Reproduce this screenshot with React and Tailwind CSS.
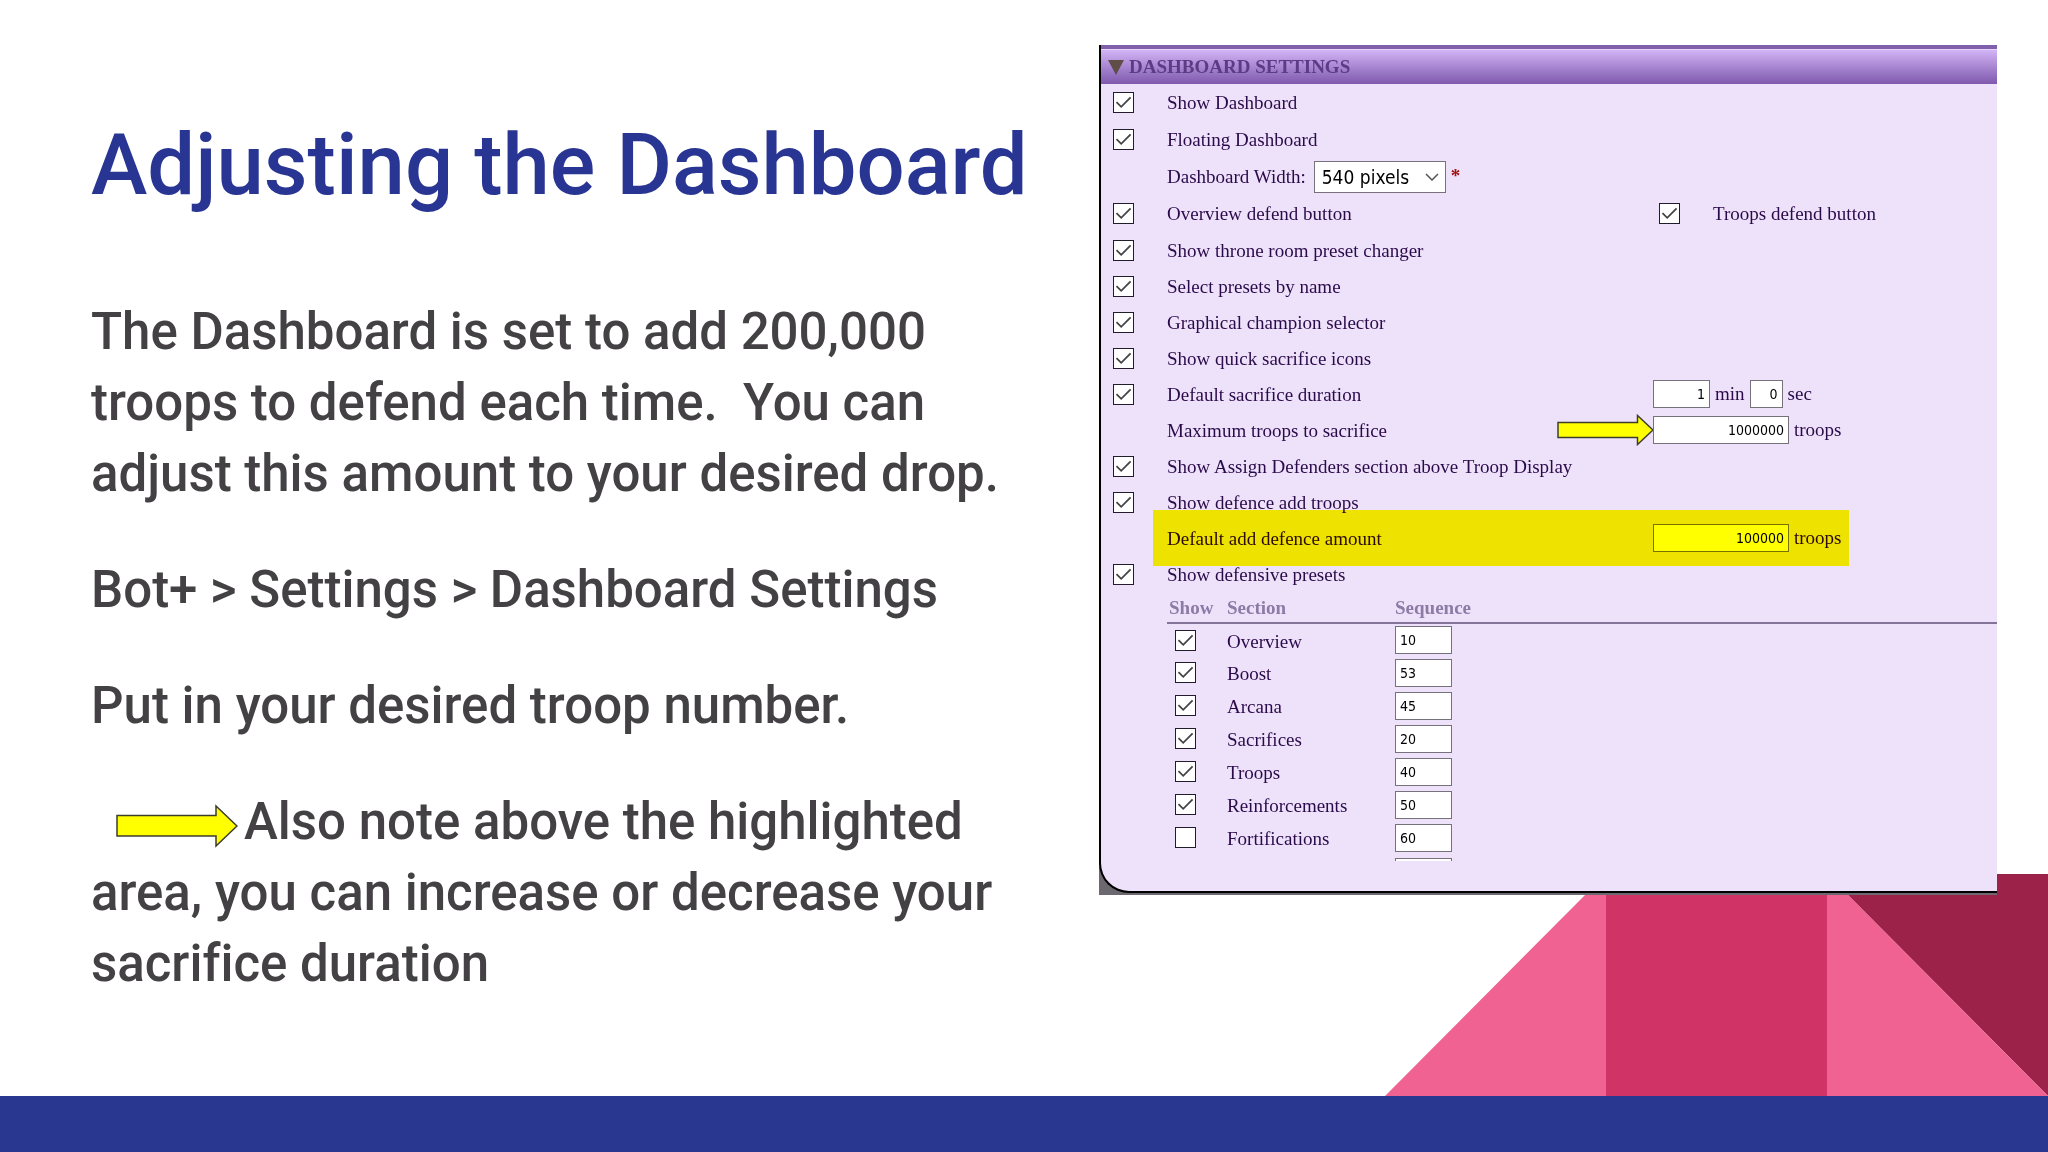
const topRows = [
  { id: "show-dashboard", label: "Show Dashboard" },
  { id: "floating-dashboard", label: "Floating Dashboard" },
];

const middleRows = [
  { id: "throne-preset", label: "Show throne room preset changer" },
  { id: "presets-by-name", label: "Select presets by name" },
  { id: "champion-selector", label: "Graphical champion selector" },
  { id: "quick-sacrifice", label: "Show quick sacrifice icons" },
];

const sections = [
  { name: "Overview", sequence: 10, show: true },
  { name: "Boost", sequence: 53, show: true },
  { name: "Arcana", sequence: 45, show: true },
  { name: "Sacrifices", sequence: 20, show: true },
  { name: "Troops", sequence: 40, show: true },
  { name: "Reinforcements", sequence: 50, show: true },
  { name: "Fortifications", sequence: 60, show: false },
];

function Checkbox({ id, checked = true, label }) {
  return (
    <span className="inline-grid size-[21px] shrink-0">
      <input
        id={id}
        type="checkbox"
        defaultChecked={checked}
        aria-label={label}
        className="peer col-start-1 row-start-1 size-[21px] appearance-none border border-[#221c2c] bg-white"
      />
      <svg
        viewBox="0 0 21 21"
        className="pointer-events-none invisible col-start-1 row-start-1 size-[21px] peer-checked:visible"
        fill="none"
        stroke="#444"
        strokeWidth="1.8"
      >
        <path d="M3.5 10.2 8.2 14.8 17.6 5.4" />
      </svg>
    </span>
  );
}

function NumberBox({ id, value, label, className }) {
  return (
    <input
      id={id}
      type="text"
      defaultValue={value}
      aria-label={label}
      className={`h-7 border border-[#77717c] px-1 font-['DejaVu_Sans_Condensed','DejaVu_Sans',sans-serif] text-sm text-black ${className}`}
    />
  );
}

function Row({ id, label, tall, hasCheckbox = true, children }) {
  return (
    <div className={`relative flex items-center ${tall ? "h-[37px]" : "h-9"}`}>
      <div className="flex w-[66px] shrink-0 pl-3">
        {hasCheckbox && <Checkbox id={id} />}
      </div>
      <label htmlFor={id} className="pt-[2px] whitespace-nowrap">
        {label}
      </label>
      {children}
    </div>
  );
}

// Controls that sit in the right half of a settings row
function Controls({ children }) {
  return (
    <div className="absolute inset-y-0 left-[552px] flex items-center gap-[5px]">
      {children}
    </div>
  );
}

function DashboardSettings() {
  return (
    <div className="relative bg-[#6d6870] pb-[2px]">
      <div className="rounded-bl-[30px] border-b-2 border-l-2 border-black bg-[#eee2fb] pb-[30px] font-['Liberation_Serif',serif] text-[19px] text-[#2b0a4a]">
        <h2 className="border-t-4 border-[#8060ab]">
          <button
            type="button"
            className="flex h-[35px] w-full items-center gap-[5px] border-t border-[#e6d3fb] bg-linear-to-b from-[#d3b4f6] to-[#7f59ad] pl-[7px] font-bold text-[#5c3c84]"
          >
            <svg viewBox="0 0 16 15" className="h-[15px] w-4" fill="#5f4d48">
              <path d="M0 0h16L8 15z" />
            </svg>
            DASHBOARD SETTINGS
          </button>
        </h2>

        {topRows.map((row) => (
          <Row key={row.id} id={row.id} label={row.label} tall />
        ))}

        <Row id="dashboard-width" label="Dashboard Width:" tall hasCheckbox={false}>
          <div className="relative ml-2">
            <select
              id="dashboard-width"
              className="block h-8 w-[132px] appearance-none border border-[#77717c] bg-white pl-[7px] font-['DejaVu_Sans_Condensed','DejaVu_Sans',sans-serif] text-[19px] leading-7 text-black"
            >
              <option>540 pixels</option>
            </select>
            <svg
              viewBox="0 0 14 8"
              className="pointer-events-none absolute top-3 right-[7px] h-2 w-[14px]"
              fill="none"
              stroke="#555"
              strokeWidth="1.5"
            >
              <path d="M1 1 7 7 13 1" />
            </svg>
          </div>
          <span className="ml-[5px] font-bold text-[#a01010]">*</span>
        </Row>

        <Row id="overview-defend" label="Overview defend button" tall>
          <Controls>
            <div className="flex w-[55px] pl-[6px]">
              <Checkbox id="troops-defend" />
            </div>
            <label htmlFor="troops-defend" className="pt-[2px]">
              Troops defend button
            </label>
          </Controls>
        </Row>

        {middleRows.map((row) => (
          <Row key={row.id} id={row.id} label={row.label} />
        ))}

        <Row id="sacrifice-duration" label="Default sacrifice duration">
          <Controls>
            <NumberBox value="1" label="Minutes" className="w-[57px] bg-white text-right" />
            <span>min</span>
            <NumberBox value="0" label="Seconds" className="w-[33px] bg-white text-right" />
            <span>sec</span>
          </Controls>
        </Row>

        <Row id="max-troops" label="Maximum troops to sacrifice" hasCheckbox={false}>
          <svg
            viewBox="0 0 97 32"
            className="absolute left-[456px] h-8 w-[97px]"
            fill="#ffff00"
            stroke="#3d3d2c"
            strokeWidth="1.5"
          >
            <path d="M1 8.5H80.500V1.500L96 16 80.500 30.500V23.500H1z" />
          </svg>
          <Controls>
            <NumberBox id="max-troops" value="1000000" className="w-[136px] bg-white text-right" />
            <span>troops</span>
          </Controls>
        </Row>

        <Row id="assign-defenders" label="Show Assign Defenders section above Troop Display" />
        <Row id="defence-add" label="Show defence add troops" />

        <Row id="defence-amount" label="Default add defence amount" hasCheckbox={false}>
          <Controls>
            <NumberBox id="defence-amount" value="100000" className="w-[136px] bg-white text-right" />
            <span>troops</span>
          </Controls>
          <div className="pointer-events-none absolute -inset-y-[10px] right-[148px] left-[52px] bg-[#ffff00] mix-blend-multiply" />
        </Row>

        <Row id="defensive-presets" label="Show defensive presets" />

        <div className="pl-[66px]">
          <table className="w-full table-fixed border-collapse text-left">
            <thead>
              <tr className="h-[31px] border-b-2 border-[#857399] text-[#8d7ba6]">
                <th className="w-[60px] pl-[2px] leading-none">Show</th>
                <th className="w-[168px] leading-none">Section</th>
                <th className="leading-none">Sequence</th>
              </tr>
            </thead>
            <tbody>
              {sections.map((section) => (
                <tr key={section.name} className="h-[33px]">
                  <td className="p-0">
                    <div className="flex pl-2">
                      <Checkbox checked={section.show} label={`Show ${section.name}`} />
                    </div>
                  </td>
                  <td className="p-0 pt-[2px] leading-none">{section.name}</td>
                  <td className="p-0">
                    <NumberBox
                      value={section.sequence}
                      label={`${section.name} sequence`}
                      className="block w-[57px] bg-white"
                    />
                  </td>
                </tr>
              ))}
            </tbody>
          </table>
          {/* top edge of the next row, cut off by the scroll area */}
          <div className="mt-1 ml-[228px] h-[3px] w-[57px] border border-b-0 border-[#77717c] bg-white" />
        </div>
      </div>
    </div>
  );
}

export default function App() {
  return (
    <div className="relative flex min-h-screen flex-col bg-white font-['Roboto',sans-serif]">
      <svg
        viewBox="0 0 663 222"
        className="absolute right-0 bottom-14 h-[222px] w-[663px]"
      >
        <path d="M0 222 221 0V222z" fill="#f06292" />
        <path d="M221 0H442V222H221z" fill="#d03365" />
        <path d="M442 0H663V222z" fill="#9c2249" />
        <path d="M442 0 663 222H442z" fill="#f06292" />
      </svg>

      <main className="grid flex-1 grid-cols-[minmax(0,1099fr)_minmax(0,949fr)] items-start pt-[45px]">
        <section className="pt-[70px] pr-[70px] pl-[91px] font-medium [font-variant-ligatures:none]">
          <h1 className="text-[85px] leading-[100px] whitespace-nowrap text-[#283593]">
            Adjusting the Dashboard
          </h1>
          <div className="mt-[81px] space-y-[45px] text-[51px] leading-[71px] text-[#434144]">
            <p>
              The Dashboard is set to add 200,000 troops to defend each
              time.&nbsp; You can adjust this amount to your desired drop.
            </p>
            <p>Bot+ &gt; Settings &gt; Dashboard Settings</p>
            <p>Put in your desired troop number.</p>
            <p>
              <svg
                viewBox="0 0 122 44"
                className="mr-[6px] ml-[25px] inline-block h-11 w-[122px]"
                fill="#ffff00"
                stroke="#3d3d2c"
                strokeWidth="1.5"
              >
                <path d="M1 11.500H100V2L121 22 100 42V32H1z" />
              </svg>
              Also note above the highlighted area, you can increase or decrease
              your sacrifice duration
            </p>
          </div>
        </section>

        <section className="pr-[51px]">
          <DashboardSettings />
        </section>
      </main>

      <footer className="relative h-14 bg-[#2a3790]" />
    </div>
  );
}
